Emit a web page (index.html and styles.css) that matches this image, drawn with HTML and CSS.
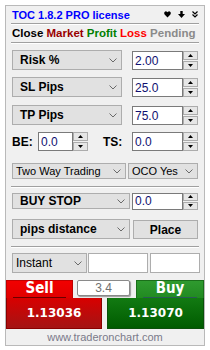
FILE: index.html
```html
<!DOCTYPE html>
<html>
<head>
<meta charset="utf-8">
<link rel="stylesheet" href="styles.css">
</head>
<body>
<div class="panel">
  <div class="title-row">
    <span class="title">TOC 1.8.2 PRO license</span>
    <span class="icons">
      <svg width="7" height="7" viewBox="0 0 7 7"><path d="M3.5 6.5 L0.6 3.4 Q-0.2 2.2 0.6 1 Q1.8 -0.2 3 0.8 L3.5 1.3 L4 0.8 Q5.2 -0.2 6.4 1 Q7.2 2.2 6.4 3.4 Z" fill="#000"/></svg>
      <svg width="7" height="7" viewBox="0 0 7 7"><path d="M2.3 0 H4.7 V3 H7 L3.5 7 L0 3 H2.3 Z" fill="#000"/></svg>
      <svg width="6" height="7" viewBox="0 0 6 7"><path d="M0.5 0.5 L3 3 L5.5 0.5 M0.5 3.5 L3 6 L5.5 3.5" fill="none" stroke="#000" stroke-width="1.2"/></svg>
    </span>
  </div>
  <div class="sep"></div>
  <div class="tabs">
    <span class="c-close">Close</span> <span class="c-market">Market</span> <span class="c-profit">Profit</span> <span class="c-loss">Loss</span> <span class="c-pending">Pending</span>
  </div>
  <div class="sep"></div>

  <div class="form">
    <div class="row r-risk">
      <div class="combo bold w110"><span>Risk %</span><svg class="chev" width="8" height="5" viewBox="0 0 8 5"><path d="M0.5 0.5 L4 4 L7.5 0.5" fill="none" stroke="#6a6a6a"/></svg></div>
      <div class="field w51">2.00</div>
      <div class="spin"><div class="sb"><svg width="5" height="3" viewBox="0 0 5 3"><path d="M0 3 L2.5 0 L5 3 Z" fill="#000"/></svg></div><div class="sb"><svg width="5" height="3" viewBox="0 0 5 3"><path d="M0 0 L2.5 3 L5 0 Z" fill="#000"/></svg></div></div>
    </div>
    <div class="row r-sl">
      <div class="combo bold w110"><span>SL Pips</span><svg class="chev" width="8" height="5" viewBox="0 0 8 5"><path d="M0.5 0.5 L4 4 L7.5 0.5" fill="none" stroke="#6a6a6a"/></svg></div>
      <div class="field w51">25.0</div>
      <div class="spin"><div class="sb"><svg width="5" height="3" viewBox="0 0 5 3"><path d="M0 3 L2.5 0 L5 3 Z" fill="#000"/></svg></div><div class="sb"><svg width="5" height="3" viewBox="0 0 5 3"><path d="M0 0 L2.5 3 L5 0 Z" fill="#000"/></svg></div></div>
    </div>
    <div class="row r-tp">
      <div class="combo bold w110"><span>TP Pips</span><svg class="chev" width="8" height="5" viewBox="0 0 8 5"><path d="M0.5 0.5 L4 4 L7.5 0.5" fill="none" stroke="#6a6a6a"/></svg></div>
      <div class="field w51">75.0</div>
      <div class="spin"><div class="sb"><svg width="5" height="3" viewBox="0 0 5 3"><path d="M0 3 L2.5 0 L5 3 Z" fill="#000"/></svg></div><div class="sb"><svg width="5" height="3" viewBox="0 0 5 3"><path d="M0 0 L2.5 3 L5 0 Z" fill="#000"/></svg></div></div>
    </div>
    <div class="row r-be">
      <span class="lbl lbl-be">BE:</span>
      <div class="field w35">0.0</div>
      <div class="spin"><div class="sb"><svg width="5" height="3" viewBox="0 0 5 3"><path d="M0 3 L2.5 0 L5 3 Z" fill="#000"/></svg></div><div class="sb"><svg width="5" height="3" viewBox="0 0 5 3"><path d="M0 0 L2.5 3 L5 0 Z" fill="#000"/></svg></div></div>
      <span class="lbl lbl-ts">TS:</span>
      <div class="field w51">0.0</div>
      <div class="spin"><div class="sb"><svg width="5" height="3" viewBox="0 0 5 3"><path d="M0 3 L2.5 0 L5 3 Z" fill="#000"/></svg></div><div class="sb"><svg width="5" height="3" viewBox="0 0 5 3"><path d="M0 0 L2.5 3 L5 0 Z" fill="#000"/></svg></div></div>
    </div>
    <div class="row r-mode">
      <div class="combo reg w114"><span>Two Way Trading</span><svg class="chev" width="8" height="5" viewBox="0 0 8 5"><path d="M0.5 0.5 L4 4 L7.5 0.5" fill="none" stroke="#6a6a6a"/></svg></div>
      <div class="combo reg w70 gap2"><span>OCO Yes</span><svg class="chev" width="8" height="5" viewBox="0 0 8 5"><path d="M0.5 0.5 L4 4 L7.5 0.5" fill="none" stroke="#6a6a6a"/></svg></div>
    </div>
  </div>
  <div class="sep"></div>
  <div class="form">
    <div class="row r-type">
      <div class="combo bold w118"><span>BUY STOP</span><svg class="chev" width="8" height="5" viewBox="0 0 8 5"><path d="M0.5 0.5 L4 4 L7.5 0.5" fill="none" stroke="#6a6a6a"/></svg></div>
      <div class="field w51 gap2">0.0</div>
      <div class="spin"><div class="sb"><svg width="5" height="3" viewBox="0 0 5 3"><path d="M0 3 L2.5 0 L5 3 Z" fill="#000"/></svg></div><div class="sb"><svg width="5" height="3" viewBox="0 0 5 3"><path d="M0 0 L2.5 3 L5 0 Z" fill="#000"/></svg></div></div>
    </div>
    <div class="row r-place">
      <div class="combo bold w118"><span>pips distance</span><svg class="chev" width="8" height="5" viewBox="0 0 8 5"><path d="M0.5 0.5 L4 4 L7.5 0.5" fill="none" stroke="#6a6a6a"/></svg></div>
      <div class="btn">Place</div>
    </div>
  </div>
  <div class="sep"></div>
  <div class="form">
    <div class="row r-exec">
      <div class="combo reg12 w75"><span>Instant</span><svg class="chev" width="8" height="5" viewBox="0 0 8 5"><path d="M0.5 0.5 L4 4 L7.5 0.5" fill="none" stroke="#6a6a6a"/></svg></div>
      <div class="field w60 gap1"></div>
      <div class="field w50 gap2"></div>
    </div>
  </div>

  <div class="trade">
    <div class="side sell">
      <div class="tab"><span>Sell</span></div>
      <div class="price">1.13036</div>
    </div>
    <div class="side buy">
      <div class="tab"><span>Buy</span></div>
      <div class="price">1.13070</div>
    </div>
    <div class="spread">3.4</div>
  </div>
  <div class="footer">www.traderonchart.com</div>
</div>
</body>
</html>
```

FILE: styles.css
```css
html, body {
  margin: 0;
  padding: 0;
  background: #ffffff;
}
body {
  font-family: "Liberation Sans", Arial, sans-serif;
  font-size: 12px;
  color: #000;
}
.panel {
  margin: 5px 0 0 5px;
  width: 200px;
  height: 341px;
  box-sizing: border-box;
  border: 1px solid #b9b9b9;
  background: #f0f0f0;
  display: flex;
  flex-direction: column;
}
.title-row {
  height: 17px;
  padding: 0 6px 0 6px;
  display: flex;
  align-items: center;
  justify-content: space-between;
}
.title {
  color: #0000ff;
  font-weight: bold;
  font-size: 11px;
}
.icons {
  display: flex;
  gap: 7px;
  align-items: center;
  margin-right: 0;
}
.icons svg { display: block; }
.sep {
  height: 1px;
  margin: 0 5px;
  background: #a0a0a0;
  border-bottom: 1px solid #ffffff;
  flex: none;
}
.tabs {
  height: 17px;
  line-height: 17px;
  padding-left: 6px;
  font-weight: bold;
  font-size: 11.5px;
  white-space: nowrap;
}
.c-close { color: #000; }
.c-market { color: #990000; }
.c-profit { color: #008000; }
.c-loss { color: #ff0000; }
.c-pending { color: #8a8a8a; }

.form {
  padding: 6px 6px 0 6px;
  display: flex;
  flex-direction: column;
}
.row {
  display: flex;
  align-items: center;
  flex: none;
}
.r-risk, .r-sl, .r-tp { height: 20px; }
.r-sl { margin-top: 7px; }
.r-tp { margin-top: 8px; }
.r-be { height: 19px; margin-top: 7px; }
.r-mode { height: 16px; margin-top: 12px; margin-bottom: 7px; }
.r-type { height: 16px; margin-top: -1px; }
.r-place { height: 20px; margin-top: 10px; margin-bottom: 7px; }
.r-exec { height: 20px; margin-top: -1px; margin-right: -2px; }

.combo {
  height: 100%;
  box-sizing: border-box;
  background: #e1e1e1;
  border: 1px solid #adadad;
  display: flex;
  align-items: center;
  justify-content: space-between;
  padding: 0 4px 0 7px;
  flex: none;
  white-space: nowrap;
}
.combo.bold { font-weight: bold; }
.combo.reg { font-size: 11px; padding-left: 3px; }
.combo.reg12 { padding-left: 3px; }
.chev { display: block; flex: none; }
.w110 { width: 110px; margin-right: 10px; }
.w114 { width: 114px; }
.w118 { width: 118px; }
.w70 { width: 70px; }
.w75 { width: 75px; }
.w51 { width: 51px; }
.w35 { width: 35px; }
.w60 { width: 60px; }
.w50 { width: 50px; }
.gap1 { margin-left: 1px; }
.gap2 { margin-left: 2px; }

.field {
  height: 100%;
  box-sizing: border-box;
  background: #ffffff;
  border: 1px solid #7a7a7a;
  color: #101070;
  padding-left: 2px;
  display: flex;
  align-items: center;
  flex: none;
}
.r-risk .field, .r-sl .field, .r-tp .field { height: 19px; margin-top: 1px; }
.r-exec .field { border-color: #adadad; }
.r-type .field { height: 17px; }

.spin {
  width: 15px;
  height: 19px;
  display: flex;
  flex-direction: column;
  justify-content: space-between;
  flex: none;
}
.r-risk .spin, .r-sl .spin, .r-tp .spin { margin-top: 1px; }
.r-type .spin { height: 17px; }
.sb {
  height: 9px;
  box-sizing: border-box;
  border: 1px solid #acacac;
  background: #e6e6e6;
  display: flex;
  align-items: center;
  justify-content: center;
}
.r-type .sb { height: 8px; }
.sb svg { display: block; }

.lbl {
  font-weight: bold;
  flex: none;
}
.lbl-be { width: 26px; }
.lbl-ts { width: 29px; margin-left: 15px; }

.btn {
  margin-left: 3px;
  width: 65px;
  height: 19px;
  margin-top: 1px;
  box-sizing: border-box;
  background: #e1e1e1;
  border: 1px solid #adadad;
  font-weight: bold;
  display: flex;
  align-items: center;
  justify-content: center;
}

.trade {
  position: relative;
  margin-top: 7px;
  height: 49px;
  display: flex;
  justify-content: space-between;
  flex: none;
}
.side {
  display: flex;
  flex-direction: column;
}
.sell { width: 96px; align-items: flex-start; }
.buy { width: 97px; align-items: flex-end; }
.tab {
  height: 18px;
  box-sizing: border-box;
  display: flex;
  justify-content: center;
  align-items: flex-end;
  padding: 0 6px;
}
.tab span {
  display: block;
  width: 100%;
  text-align: center;
  color: #fff;
  font-family: "DejaVu Sans Condensed", "DejaVu Sans", sans-serif;
  font-weight: bold;
  font-size: 15px;
  line-height: 17px;
}
.sell .tab {
  width: 67px;
  background: linear-gradient(#f20000, #e00000);
  border: 1px solid #c00000;
  border-bottom: none;
}
.sell .tab span { border-bottom: 1px solid #6a0000; }
.buy .tab {
  width: 68px;
  background: linear-gradient(#2f9a2f, #218a21);
  border: 1px solid #1a6e1a;
  border-bottom: none;
}
.buy .tab span { border-bottom: 1px solid #2a5a55; }
.price {
  align-self: stretch;
  flex: 1;
  display: flex;
  align-items: center;
  justify-content: center;
  color: #fff;
  font-family: "DejaVu Sans", sans-serif;
  font-weight: bold;
  font-size: 12px;
}
.sell .price {
  background: linear-gradient(#d80000, #a41414);
  border: 1px solid #8a0000;
  border-top: none;
}
.buy .price {
  background: linear-gradient(#127a12, #005c00);
  border: 1px solid #0a500a;
  border-top: none;
}
.spread {
  position: absolute;
  left: 71px;
  top: 0;
  width: 53px;
  height: 16px;
  box-sizing: border-box;
  background: #fff;
  border: 1px solid #8a8a8a;
  border-radius: 2px;
  box-shadow: 1px 1px 1px rgba(0,0,0,0.35);
  color: #707070;
  font-size: 12px;
  display: flex;
  align-items: center;
  justify-content: center;
}
.footer {
  flex: 1;
  display: flex;
  align-items: center;
  justify-content: center;
  color: #7a7a8a;
  font-size: 11px;
  padding-bottom: 1px;
}
```
